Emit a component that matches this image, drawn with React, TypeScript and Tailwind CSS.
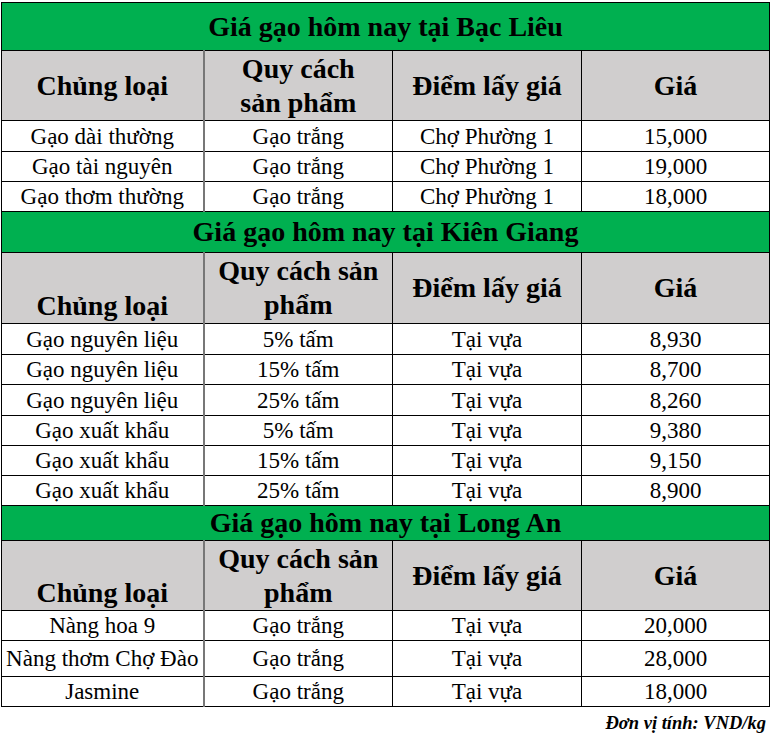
import React from 'react'

type Row = [string, string, string, string]

type Section = {
  title: string
  titleH: string
  headH: string
  spec: string[]
  bottomKind: boolean
  rows: Row[]
  rowH: string[]
}

const sections: Section[] = [
  {
    title: 'Giá gạo hôm nay tại Bạc Liêu',
    titleH: 'h-[48px]',
    headH: 'h-[70px]',
    spec: ['Quy cách', 'sản phẩm'],
    bottomKind: false,
    rows: [
      ['Gạo dài thường', 'Gạo trắng', 'Chợ Phường 1', '15,000'],
      ['Gạo tài nguyên', 'Gạo trắng', 'Chợ Phường 1', '19,000'],
      ['Gạo thơm thường', 'Gạo trắng', 'Chợ Phường 1', '18,000'],
    ],
    rowH: ['h-[31px]', 'h-[30px]', 'h-[30px]'],
  },
  {
    title: 'Giá gạo hôm nay tại Kiên Giang',
    titleH: 'h-[41px]',
    headH: 'h-[71px]',
    spec: ['Quy cách sản', 'phẩm'],
    bottomKind: true,
    rows: [
      ['Gạo nguyên liệu', '5% tấm', 'Tại vựa', '8,930'],
      ['Gạo nguyên liệu', '15% tấm', 'Tại vựa', '8,700'],
      ['Gạo nguyên liệu', '25% tấm', 'Tại vựa', '8,260'],
      ['Gạo xuất khẩu', '5% tấm', 'Tại vựa', '9,380'],
      ['Gạo xuất khẩu', '15% tấm', 'Tại vựa', '9,150'],
      ['Gạo xuất khẩu', '25% tấm', 'Tại vựa', '8,900'],
    ],
    rowH: ['h-[31px]', 'h-[30px]', 'h-[31px]', 'h-[30px]', 'h-[30px]', 'h-[30px]'],
  },
  {
    title: 'Giá gạo hôm nay tại Long An',
    titleH: 'h-[35px]',
    headH: 'h-[70px]',
    spec: ['Quy cách sản', 'phẩm'],
    bottomKind: true,
    rows: [
      ['Nàng hoa 9', 'Gạo trắng', 'Tại vựa', '20,000'],
      ['Nàng thơm Chợ Đào', 'Gạo trắng', 'Tại vựa', '28,000'],
      ['Jasmine', 'Gạo trắng', 'Tại vựa', '18,000'],
    ],
    rowH: ['h-[30px]', 'h-[36px]', 'h-[30px]'],
  },
]

export default function App() {
  return (
    <div className="w-[770px] h-[742px] bg-white pt-[2px] pl-[1px] text-black font-['Liberation_Serif',serif]">
      <table className="w-[768px] table-fixed border-collapse border border-black text-black font-['Liberation_Serif',serif]">
        <colgroup>
          <col className="w-[202px]" />
          <col className="w-[189px]" />
          <col className="w-[189px]" />
          <col className="w-[188px]" />
        </colgroup>
        {sections.map(s => (
          <tbody key={s.title}>
            <tr className={s.titleH}>
              <td colSpan={4} className="bg-[#00b050] border border-black text-center text-[28px] font-bold leading-none">
                {s.title}
              </td>
            </tr>
            <tr className={`${s.headH} bg-[#d0cece] text-[28px] font-bold`}>
              <td className={`border border-black border-r-[#777] border-r-2 text-center leading-[34px] ${s.bottomKind ? 'align-bottom' : 'align-middle'}`}>
                Chủng loại
              </td>
              <td className="border border-black text-center leading-[34px] align-middle">
                {s.spec[0]}
                <br />
                {s.spec[1]}
              </td>
              <td className="border border-black text-center leading-[34px] align-middle">Điểm lấy giá</td>
              <td className="border border-black text-center leading-[34px] align-middle">Giá</td>
            </tr>
            {s.rows.map((r, i) => (
              <tr key={i} className={`${s.rowH[i]} text-[23px] leading-none`}>
                <td className="border border-black border-r-[#777] border-r-2 text-center whitespace-nowrap">{r[0]}</td>
                <td className="border border-black text-center">{r[1]}</td>
                <td className="border border-black text-center">{r[2]}</td>
                <td className="border border-black text-center">{r[3]}</td>
              </tr>
            ))}
          </tbody>
        ))}
      </table>
      <div className="flex justify-end pr-[4px] pt-[3px]">
        <span className="text-[18.5px] font-bold italic font-['Liberation_Serif',serif]">Đơn vị tính: VND/kg</span>
      </div>
    </div>
  )
}
